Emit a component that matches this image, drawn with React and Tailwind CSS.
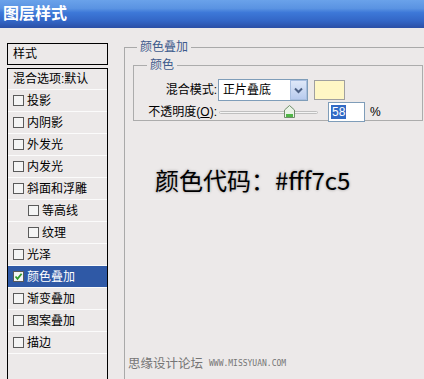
import React from 'react';

const items = [
  { label: '投影' },
  { label: '内阴影' },
  { label: '外发光' },
  { label: '内发光' },
  { label: '斜面和浮雕' },
  { label: '等高线', sub: true },
  { label: '纹理', sub: true },
  { label: '光泽' },
  { label: '颜色叠加', checked: true },
  { label: '渐变叠加' },
  { label: '图案叠加' },
  { label: '描边' },
];

function Box({ checked }) {
  return (
    <span className="w-[11px] h-[11px] border border-[#5a5a5a] bg-[#f4f4f4] flex items-center justify-center shrink-0">
      {checked && (
        <svg width="9" height="9" viewBox="0 0 9 9">
          <path d="M1.5 4.5 L3.5 6.8 L7.6 1.8" fill="none" stroke="#2f9a2a" strokeWidth="1.8" />
        </svg>
      )}
    </span>
  );
}

export default function App() {
  return (
    <div className="w-[424px] h-[379px] overflow-hidden bg-[#ece9e9] text-[12px] text-black font-['Liberation_Sans','Noto_Sans_CJK_SC',sans-serif]">
      {/* title bar */}
      <div className="h-[28px] flex items-center pl-[3px] bg-[linear-gradient(#6aa2ea_0%,#5a93e2_30%,#3d78d8_45%,#3366c6_75%,#2b4fa6_100%)]">
        <span className="text-white font-bold text-[16px] leading-none">图层样式</span>
      </div>

      <div className="flex h-[351px]">
        {/* left list */}
        <div className="ml-[7px] mt-[15px] w-[101px] flex flex-col">
          <div className="h-[22px] border border-black flex items-center pl-[5px]">样式</div>
          <div className="mt-[3px] flex-1 border border-black border-b-0">
            <div className="h-[21px] flex items-center pl-[5px] border-b border-[#fbfbfb]">混合选项:默认</div>
            {items.map((it) => (
              <div
                key={it.label}
                className={`h-[22px] flex items-center gap-[3px] border-b border-[#fbfbfb] ${it.sub ? 'pl-[20px]' : 'pl-[5px]'} ${it.checked ? 'bg-[#2f59a6] text-white' : ''}`}
              >
                <Box checked={it.checked} />
                <span>{it.label}</span>
              </div>
            ))}
          </div>
        </div>

        {/* right area */}
        <fieldset className="ml-[16px] mt-[12px] flex-1 border-0 border-l border-t border-[#a9a9a9] pl-[8px] pr-[1px] min-w-0">
          <legend className="ml-[4px] px-[3px] leading-[14px] text-[#3c5a8c]">颜色叠加</legend>

          <fieldset className="mt-[4px] h-[63px] border border-[#acacac] p-0 pl-[1px]">
            <legend className="ml-[12px] px-[3px] leading-[14px] text-[#3c5a8c]">颜色</legend>

            <div className="mt-[7px] flex items-center h-[22px]">
              <span className="w-[82px] text-right">混合模式:</span>
              <div className="ml-[1px] w-[90px] h-[22px] border border-[#7f9db9] bg-white flex items-center">
                <span className="pl-[4px] flex-1">正片叠底</span>
                <span className="w-[17px] h-[20px] border border-[#a9bfe0] bg-[linear-gradient(#dfe8f8,#b8cbee)] flex items-center justify-center">
                  <svg width="9" height="7" viewBox="0 0 9 7">
                    <path d="M1 1.5 L4.5 5 L8 1.5" fill="none" stroke="#4d6185" strokeWidth="2" />
                  </svg>
                </span>
              </div>
              <span className="ml-[6px] w-[31px] h-[20px] border border-[#a0a0a0] bg-[#fff7c5]" />
            </div>

            <div className="mt-[1px] flex items-center h-[20px]">
              <span className="w-[82px] text-right">不透明度(<u>O</u>):</span>
              <div className="ml-[2px] w-[99px] h-[14px] flex items-center">
                <div className="relative w-full h-[3px] border border-[#bfbfbf] rounded-[2px] bg-[#f4f4f4]">
                  <svg className="absolute left-[64px] top-[-7px]" width="11" height="13" viewBox="0 0 11 13">
                    <path d="M5.5 0.5 L10.5 5 L10.5 12.5 L0.5 12.5 L0.5 5 Z" fill="#e9f3e6" stroke="#6f8d6a" />
                    <rect x="2" y="9" width="7" height="3" fill="#4fb646" />
                  </svg>
                </div>
              </div>
              <div className="ml-[10px] w-[37px] h-[20px] border border-[#7f9db9] bg-white flex items-center pl-[2px]">
                <span className="bg-[#316ac5] text-white leading-[14px] px-[1px]">58</span>
              </div>
              <span className="ml-[5px]">%</span>
            </div>
          </fieldset>

          <div className="mt-[44px] pl-[22px] h-[30px] leading-[30px] text-[24px] font-['Noto_Sans_CJK_SC',sans-serif] [text-shadow:0_0_3px_rgba(0,0,0,0.35)]">
            颜色代码：#fff7c5
          </div>

          <div className="mt-[161px] -ml-[5px] flex items-center gap-[6px]">
            <span className="text-[12.5px] text-[#757575] leading-[16px]">思缘设计论坛</span>
            <span className="text-[8px] text-[#757575] font-['DejaVu_Sans_Mono',monospace]">WWW.MISSYUAN.COM</span>
          </div>
        </fieldset>
      </div>
    </div>
  );
}
